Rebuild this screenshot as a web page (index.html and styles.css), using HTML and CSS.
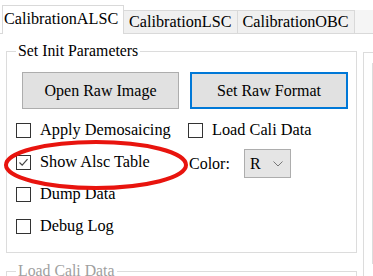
FILE: index.html
```html
<!DOCTYPE html>
<html>
<head>
<meta charset="utf-8">
<link rel="stylesheet" href="styles.css">
</head>
<body>
<div class="tabs">
  <div class="tab active">CalibrationALSC</div>
  <div class="tab">CalibrationLSC</div>
  <div class="tab">CalibrationOBC</div>
  <div class="tabfill"></div>
</div>
<div class="page">
  <div class="main">
    <fieldset class="group">
      <legend>Set Init Parameters</legend>
      <div class="buttons">
        <div class="btn">Open Raw Image</div>
        <div class="btn focus">Set Raw Format</div>
      </div>
      <div class="grid">
        <div class="chk"><span class="box"></span><span>Apply Demosaicing</span></div>
        <div class="chk"><span class="box"></span><span>Load Cali Data</span></div>
        <div class="chk"><span class="box"><svg width="13" height="13" viewBox="0 0 13 13"><path d="M2.5 6.5 L5.2 9.2 L10.5 3.2" fill="none" stroke="#444" stroke-width="1.2"/></svg></span><span>Show Alsc Table</span></div>
        <div class="colorrow"><span>Color:</span><div class="combo"><span>R</span><svg width="10" height="6" viewBox="0 0 10 6"><path d="M0.5 0.5 L5 5 L9.5 0.5" fill="none" stroke="#777" stroke-width="1"/></svg></div></div>
        <div class="chk"><span class="box"></span><span>Dump Data</span></div>
        <div></div>
        <div class="chk"><span class="box"></span><span>Debug Log</span></div>
        <div></div>
      </div>
    </fieldset>
    <fieldset class="group disabled">
      <legend>Load Cali Data</legend>
      <div class="spacer"></div>
    </fieldset>
  </div>
  <div class="side">
    <div class="sidebox"><div class="inner"></div></div>
  </div>
</div>
<svg class="mark" width="200" height="60" viewBox="0 0 200 60">
  <ellipse cx="96" cy="27" rx="90" ry="23" fill="none" stroke="#e8140e" stroke-width="4"/>
</svg>
</body>
</html>
```
FILE: styles.css
```css
html, body {
  margin: 0;
  padding: 0;
  background: #ffffff;
  font-family: "Liberation Serif", "Times New Roman", serif;
  color: #000;
  overflow: hidden;
}
body {
  width: 373px;
  height: 276px;
  position: relative;
}
.tabs {
  display: flex;
  align-items: flex-end;
  height: 34px;
  padding-left: 2px;
  box-sizing: border-box;
  border-bottom: 1px solid #d9d9d9;
}
.tab {
  height: 23px;
  box-sizing: border-box;
  padding: 0 5px;
  background: #f0f0f0;
  border: 1px solid #d9d9d9;
  border-bottom: none;
  margin-left: -1px;
  font-size: 16.2px;
  line-height: 22px;
  white-space: nowrap;
}
.tab.active {
  height: 29px;
  background: #fff;
  margin-left: 0;
  margin-bottom: -1px;
  padding: 0 0 0 1px;
  line-height: 27px;
  font-size: 16.2px;
  position: relative;
  z-index: 1;
  width: 122px;
  overflow: hidden;
}
.tabfill {
  flex: 1;
  height: 23px;
  background: #f5f5f5;
}
.page {
  display: flex;
  padding-left: 6px;
  gap: 6px;
}
.main {
  width: 351px;
  flex: none;
}
.group {
  margin: 0;
  padding: 0 0 10px 9px;
  border: 1px solid #dcdcdc;
  min-width: 0;
  margin-top: 8px;
}
.group legend {
  font-size: 15.8px;
  line-height: 18px;
  padding: 0 2px;
  margin-left: 0;
}
.buttons {
  display: flex;
  gap: 11px;
  margin-top: 12px;
  margin-left: 6px;
}
.btn {
  width: 157px;
  height: 37px;
  box-sizing: border-box;
  background: #e1e1e1;
  border: 1px solid #adadad;
  font-size: 16px;
  display: flex;
  align-items: center;
  justify-content: center;
}
.btn.focus {
  width: 158px;
  border: 2px solid #0078d7;
}
.grid {
  display: grid;
  grid-template-columns: 172px 1fr;
  grid-auto-rows: 32px;
  margin-top: 5px;
}
.chk {
  display: flex;
  align-items: center;
  gap: 9px;
  font-size: 16.3px;
}
.box {
  width: 15px;
  height: 15px;
  box-sizing: border-box;
  border: 1px solid #333;
  background: #fff;
  display: flex;
  align-items: center;
  justify-content: center;
  flex: none;
}
.colorrow {
  display: flex;
  align-items: center;
  font-size: 16px;
  padding-left: 1px;
  gap: 14px;
  margin-top: 3px;
}
.combo {
  width: 47px;
  height: 29px;
  box-sizing: border-box;
  background: #e5e5e5;
  border: 1px solid #adadad;
  display: flex;
  align-items: center;
  justify-content: space-between;
  padding: 0 7px 0 5px;
}
.group.disabled {
  color: #a0a0a0;
  margin-top: 9px;
}
.group.disabled legend {
  color: #a0a0a0;
}
.spacer {
  height: 40px;
}
.side {
  flex: 1;
  padding-top: 18px;
}
.sidebox {
  border: 1px solid #dcdcdc;
  border-right: none;
  height: 240px;
  padding: 10px 0 0 8px;
}
.inner {
  border-left: 1px solid #dcdcdc;
  border-top: 1px solid #dcdcdc;
  height: 200px;
}
.mark {
  position: absolute;
  left: 0;
  top: 138px;
}
```
